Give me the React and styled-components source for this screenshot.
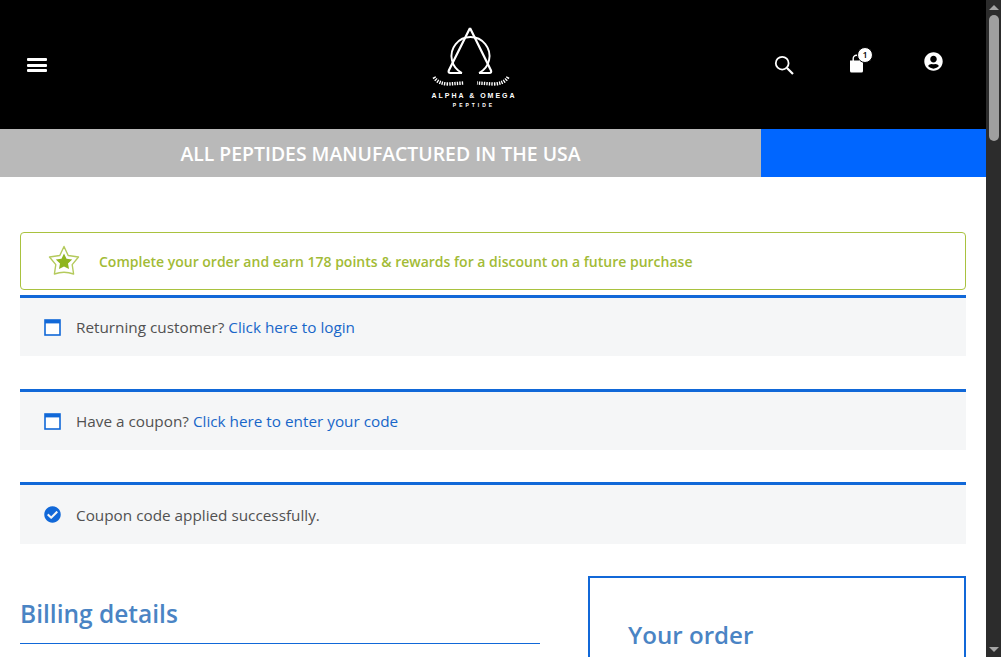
import React from "react";
import styled, { createGlobalStyle } from "styled-components";
import { FaUserCircle, FaCheckCircle } from "react-icons/fa";

const GlobalStyle = createGlobalStyle`
  html, body {
    margin: 0;
    padding: 0;
    height: 100%;
    overflow: hidden;
    background: #fff;
    font-family: "Open Sans", "Noto Sans", sans-serif;
  }
`;

const Viewport = styled.div`
  display: flex;
  width: 1001px;
  height: 657px;
  overflow: hidden;
`;
const Page = styled.div`
  width: 986px;
  flex: none;
  height: 657px;
  overflow: hidden;
`;
const Scrollbar = styled.div`
  width: 15px;
  flex: none;
  height: 657px;
  background: #2c2c2c;
  display: flex;
  flex-direction: column;
  align-items: center;
`;
const ScrollArrow = styled.div`
  width: 0;
  height: 0;
  border-left: 5px solid transparent;
  border-right: 5px solid transparent;
  margin: 5px 0 3px;
  ${({ $down }) =>
    $down
      ? "border-top: 5px solid #a5a5a5; margin-top: auto; margin-bottom: 5px;"
      : "border-bottom: 5px solid #a5a5a5;"}
`;
const ScrollThumb = styled.div`
  width: 10px;
  height: 126px;
  margin-top: 2px;
  border-radius: 5px;
  background: #9f9f9f;
`;

const Header = styled.header`
  height: 129px;
  background: #000;
  display: flex;
  align-items: flex-start;
  color: #fff;
`;
const MenuButton = styled.div`
  margin: 58px 0 0 27px;
  width: 20px;
  flex: none;
  display: flex;
  flex-direction: column;
  gap: 2.5px;
  span {
    display: block;
    height: 3px;
    border-radius: 1px;
    background: #fff;
  }
`;
const Logo = styled.div`
  margin: 24px 0 0 382px;
  width: 90px;
  flex: none;
  display: flex;
  flex-direction: column;
  align-items: center;
`;
const LogoName = styled.div`
  font-family: "Liberation Sans", sans-serif;
  font-size: 7px;
  font-weight: 700;
  letter-spacing: 2px;
  white-space: nowrap;
  margin-top: 4px;
  line-height: 9px;
`;
const LogoSub = styled.div`
  font-family: "Liberation Sans", sans-serif;
  font-size: 5px;
  font-weight: 700;
  letter-spacing: 3px;
  line-height: 7px;
  margin-top: 2px;
`;
const IconSlot = styled.div`
  position: relative;
  margin: ${({ $top }) => $top}px 0 0 ${({ $left }) => $left}px;
  display: flex;
  flex: none;
`;
const Badge = styled.span`
  position: absolute;
  left: 7px;
  top: -7px;
  width: 16px;
  height: 16px;
  border-radius: 50%;
  background: #fff;
  border: 1px solid #000;
  box-sizing: border-box;
  color: #000;
  font-size: 9px;
  font-weight: 600;
  line-height: 14px;
  text-align: center;
`;

const Banner = styled.div`
  display: flex;
  height: 48px;
`;
const BannerText = styled.div`
  width: 761px;
  background: #b9b9b9;
  color: #fff;
  font-size: 19.4px;
  font-weight: 600;
  line-height: 50px;
  text-align: center;
`;
const BannerBlue = styled.div`
  flex: 1;
  background: #0066ff;
`;

const Content = styled.main`
  padding: 55px 20px 0;
`;
const Points = styled.div`
  height: 56px;
  border: 1px solid #a9c23f;
  border-radius: 4px;
  display: flex;
  align-items: center;
  gap: 19px;
  padding-left: 27px;
  color: #a2bb36;
  font-size: 14px;
  font-weight: 600;
`;
const Notice = styled.div`
  height: ${({ $h }) => $h || 58}px;
  margin-top: ${({ $mt }) => $mt}px;
  border-top: 3px solid #1168d8;
  background: #f5f6f7;
  display: flex;
  align-items: center;
  gap: 15px;
  padding-left: 24px;
  color: #515151;
  font-size: 15.3px;
  svg {
    flex: none;
  }
`;
const NoticeLink = styled.a`
  color: #1866c9;
  text-decoration: none;
`;

const Columns = styled.div`
  display: flex;
  justify-content: space-between;
  align-items: flex-start;
  margin-top: 32px;
`;
const Billing = styled.section`
  width: 520px;
  padding-top: 20px;
`;
const Heading = styled.h3`
  margin: 0;
  color: #4a84c4;
  font-size: ${({ $size }) => $size}px;
  font-weight: 600;
  line-height: 36px;
`;
const BillingHeading = styled(Heading)`
  padding-bottom: 11px;
  border-bottom: 1px solid #1168d8;
`;
const Order = styled.section`
  width: 378px;
  height: 200px;
  box-sizing: border-box;
  border: 2px solid #1168d8;
  padding: 39px 38px 0;
`;

const NoticeIcon = () => (
  <svg width="17" height="17" viewBox="0 0 17 17">
    <rect x="1" y="1" width="15" height="15" fill="#fff" stroke="#1168d8" strokeWidth="1.6" />
    <rect x="1" y="1" width="15" height="3.4" fill="#1168d8" />
  </svg>
);

const LogoMark = () => (
  <svg width="90" height="63" viewBox="0 0 90 63" fill="none" stroke="#fff">
    <path d="M33 49 A19 19 0 1 1 50 49" strokeWidth="1.9" />
    <path
      d="M41 4 L19.8 46.5 Q19 49 21.5 49 L33 49 M41 4 L62 46.5 Q62.8 49 60.3 49 L50 49"
      strokeWidth="2.2"
      strokeLinejoin="round"
    />
    <path
      d="M5 53 Q9 60 20 60 L35 59 M79 53 Q75 60 64 60 L48 59"
      strokeWidth="3.4"
      strokeDasharray="1.4 1.1"
    />
  </svg>
);

function App() {
  return (
    <Viewport>
      <GlobalStyle />
      <Page>
        <Header>
          <MenuButton>
            <span />
            <span />
            <span />
          </MenuButton>
          <Logo>
            <LogoMark />
            <LogoName>ALPHA &amp; OMEGA</LogoName>
            <LogoSub>PEPTIDE</LogoSub>
          </Logo>
          <IconSlot $left={255} $top={55}>
            <svg width="20" height="20" viewBox="0 0 20 20" fill="none" stroke="#fff">
              <circle cx="8.2" cy="8.2" r="6.4" strokeWidth="1.8" />
              <path d="M13 13 L19 19" strokeWidth="2.2" />
            </svg>
          </IconSlot>
          <IconSlot $left={56} $top={54}>
            <svg width="13" height="19" viewBox="0 0 13 19">
              <path d="M3.2 7 V4.5 a3.3 3.3 0 0 1 6.6 0 V7" fill="none" stroke="#fff" strokeWidth="1.4" />
              <path d="M0 6.5 H13 V17 a1.5 1.5 0 0 1 -1.5 1.5 H1.5 a1.5 1.5 0 0 1 -1.5 -1.5 Z" fill="#fff" />
            </svg>
            <Badge>1</Badge>
          </IconSlot>
          <IconSlot $left={61} $top={52}>
            <FaUserCircle size={19} color="#fff" />
          </IconSlot>
        </Header>
        <Banner>
          <BannerText>ALL PEPTIDES MANUFACTURED IN THE USA</BannerText>
          <BannerBlue />
        </Banner>
        <Content>
          <Points>
            <svg width="32" height="32" viewBox="0 0 32 32">
              <path
                d="M16 1.5 L20.2 10.5 L30.5 12 L24.2 19.6 L25.6 29 Q16 25.5 6.4 29 L7.8 19.6 L1.5 12 L11.8 10.5 Z"
                fill="#fff"
                stroke="#b4ca5c"
                strokeWidth="1.4"
                strokeLinejoin="round"
              />
              <path
                d="M16 8.5 L18.5 13.7 L24.2 14.5 L20 18.5 L21 24 L16 21.4 L11 24 L12 18.5 L7.8 14.5 L13.5 13.7 Z"
                fill="#8fb51f"
              />
            </svg>
            <span>Complete your order and earn 178 points &amp; rewards for a discount on a future purchase</span>
          </Points>
          <Notice $mt={5}>
            <NoticeIcon />
            <span>
              Returning customer? <NoticeLink>Click here to login</NoticeLink>
            </span>
          </Notice>
          <Notice $mt={33}>
            <NoticeIcon />
            <span>
              Have a coupon? <NoticeLink>Click here to enter your code</NoticeLink>
            </span>
          </Notice>
          <Notice $mt={32} $h={59}>
            <FaCheckCircle size={17} color="#1168d8" />
            <span>Coupon code applied successfully.</span>
          </Notice>
          <Columns>
            <Billing>
              <BillingHeading $size={24.5}>Billing details</BillingHeading>
            </Billing>
            <Order>
              <Heading $size={24.1}>Your order</Heading>
            </Order>
          </Columns>
        </Content>
      </Page>
      <Scrollbar>
        <ScrollArrow />
        <ScrollThumb />
        <ScrollArrow $down />
      </Scrollbar>
    </Viewport>
  );
}

export default App;
